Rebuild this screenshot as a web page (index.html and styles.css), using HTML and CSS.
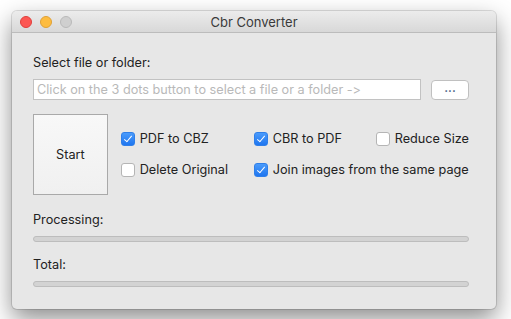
FILE: index.html
```html
<!DOCTYPE html>
<html lang="en">
  <head>
    <meta charset="UTF-8" />
    <title>Cbr Converter</title>
    <link rel="stylesheet" href="styles.css">
  </head>
  <body>
    <div class="window">
      <div class="titlebar">
        <div class="lights">
          <span class="light red"></span>
          <span class="light yellow"></span>
          <span class="light gray"></span>
        </div>
        <div class="title">Cbr Converter</div>
      </div>

      <div class="content">
        <div class="label">Select file or folder:</div>
        <div class="file-row">
          <input class="path" type="text" placeholder="Click on the 3 dots button to select a file or a folder ->" />
          <button class="browse">...</button>
        </div>

        <div class="options-row">
          <button class="start">Start</button>
          <div class="options">
            <label class="check"><span class="box checked"></span>PDF to CBZ</label>
            <label class="check"><span class="box checked"></span>CBR to PDF</label>
            <label class="check"><span class="box"></span>Reduce Size</label>
            <label class="check"><span class="box"></span>Delete Original</label>
            <label class="check wide"><span class="box checked"></span>Join images from the same page</label>
          </div>
        </div>

        <div class="label progress-label">Processing:</div>
        <div class="bar"></div>
        <div class="label total-label">Total:</div>
        <div class="bar"></div>
      </div>
    </div>
  </body>
</html>
```

FILE: styles.css
```css
body {
  margin: 0;
  padding: 11px 0 0 12px;
  background: #ffffff;
  font-family: "Inter", "Roboto", Arial, sans-serif;
  font-feature-settings: "calt" 0, "liga" 0;
  font-size: 12.7px;
  color: #222;
  height: 319px;
  box-sizing: border-box;
  overflow: hidden;
}
.window {
  width: 484px;
  height: 298px;
  border-radius: 5px;
  background-color: #e7e7e7;
  box-shadow: 0 0 0 1px rgba(0, 0, 0, 0.12), 0 10px 24px rgba(0, 0, 0, 0.45);
  display: flex;
  flex-direction: column;
  overflow: hidden;
}
.titlebar {
  height: 21px;
  flex-shrink: 0;
  background: linear-gradient(#ececec, #d8d8d8);
  border-bottom: 1px solid #bcbcbc;
  display: flex;
  align-items: center;
  position: relative;
}
.lights {
  display: flex;
  gap: 8px;
  padding-left: 8px;
}
.light {
  width: 12px;
  height: 12px;
  border-radius: 50%;
  box-sizing: border-box;
}
.red {
  background-color: #fc5753;
  border: 1px solid #df3e3b;
}
.yellow {
  background-color: #fdbc40;
  border: 1px solid #dea036;
}
.gray {
  background-color: #cfcfcf;
  border: 1px solid #b9b9b9;
}
.title {
  position: absolute;
  left: 0;
  right: 0;
  text-align: center;
  font-size: 13px;
  color: #3a3a3a;
}
.content {
  padding: 22px 27px 0 21px;
  display: flex;
  flex-direction: column;
}
.label {
  line-height: 16px;
  height: 16px;
}
.file-row {
  display: flex;
  align-items: center;
  margin-top: 8px;
}
.path {
  width: 388px;
  height: 21px;
  box-sizing: border-box;
  border: 1px solid #c2c2c2;
  background: #fff;
  padding: 0 3px;
  font-family: inherit;
  font-feature-settings: inherit;
  font-size: 12.7px;
  outline: none;
}
.path::placeholder {
  color: #b9b9b9;
}
.browse {
  margin-left: 10px;
  width: 38px;
  height: 20px;
  border: 1px solid #c0c0c0;
  border-radius: 4px;
  background: #fff;
  font-family: inherit;
  font-size: 12px;
  font-weight: 600;
  color: #3d5a80;
  padding: 0 0 4px;
  line-height: 14px;
}
.options-row {
  display: flex;
  align-items: center;
  margin-top: 14px;
}
.start {
  width: 77px;
  height: 81px;
  border: 1px solid #a9a9a9;
  background: linear-gradient(#f8f8f8, #f0f0f0);
  font-family: inherit;
  font-size: 12.7px;
  color: #222;
  padding: 0;
}
.options {
  margin-left: 13px;
  display: grid;
  grid-template-columns: 133px 122px auto;
  row-gap: 15px;
}
.check {
  display: flex;
  align-items: center;
  gap: 5px;
  line-height: 16px;
  white-space: nowrap;
}
.wide {
  grid-column: span 2;
}
.box {
  width: 14px;
  height: 14px;
  box-sizing: border-box;
  border-radius: 3px;
  border: 1px solid #b5b5b5;
  background: #fff;
  flex-shrink: 0;
  position: relative;
}
.box.checked {
  border-color: #2f7fe9;
  background: linear-gradient(#4a9bfb, #1f76f0);
}
.box.checked::after {
  content: "";
  position: absolute;
  left: 4px;
  top: 1px;
  width: 3px;
  height: 7px;
  border-right: 1.6px solid #fff;
  border-bottom: 1.6px solid #fff;
  transform: rotate(40deg);
}
.progress-label {
  margin-top: 17px;
}
.total-label {
  margin-top: 15px;
}
.bar {
  margin-top: 8px;
  width: 436px;
  height: 6px;
  box-sizing: border-box;
  border: 1px solid #bdbdbd;
  border-radius: 3px;
  background: #d3d3d3;
}
```
